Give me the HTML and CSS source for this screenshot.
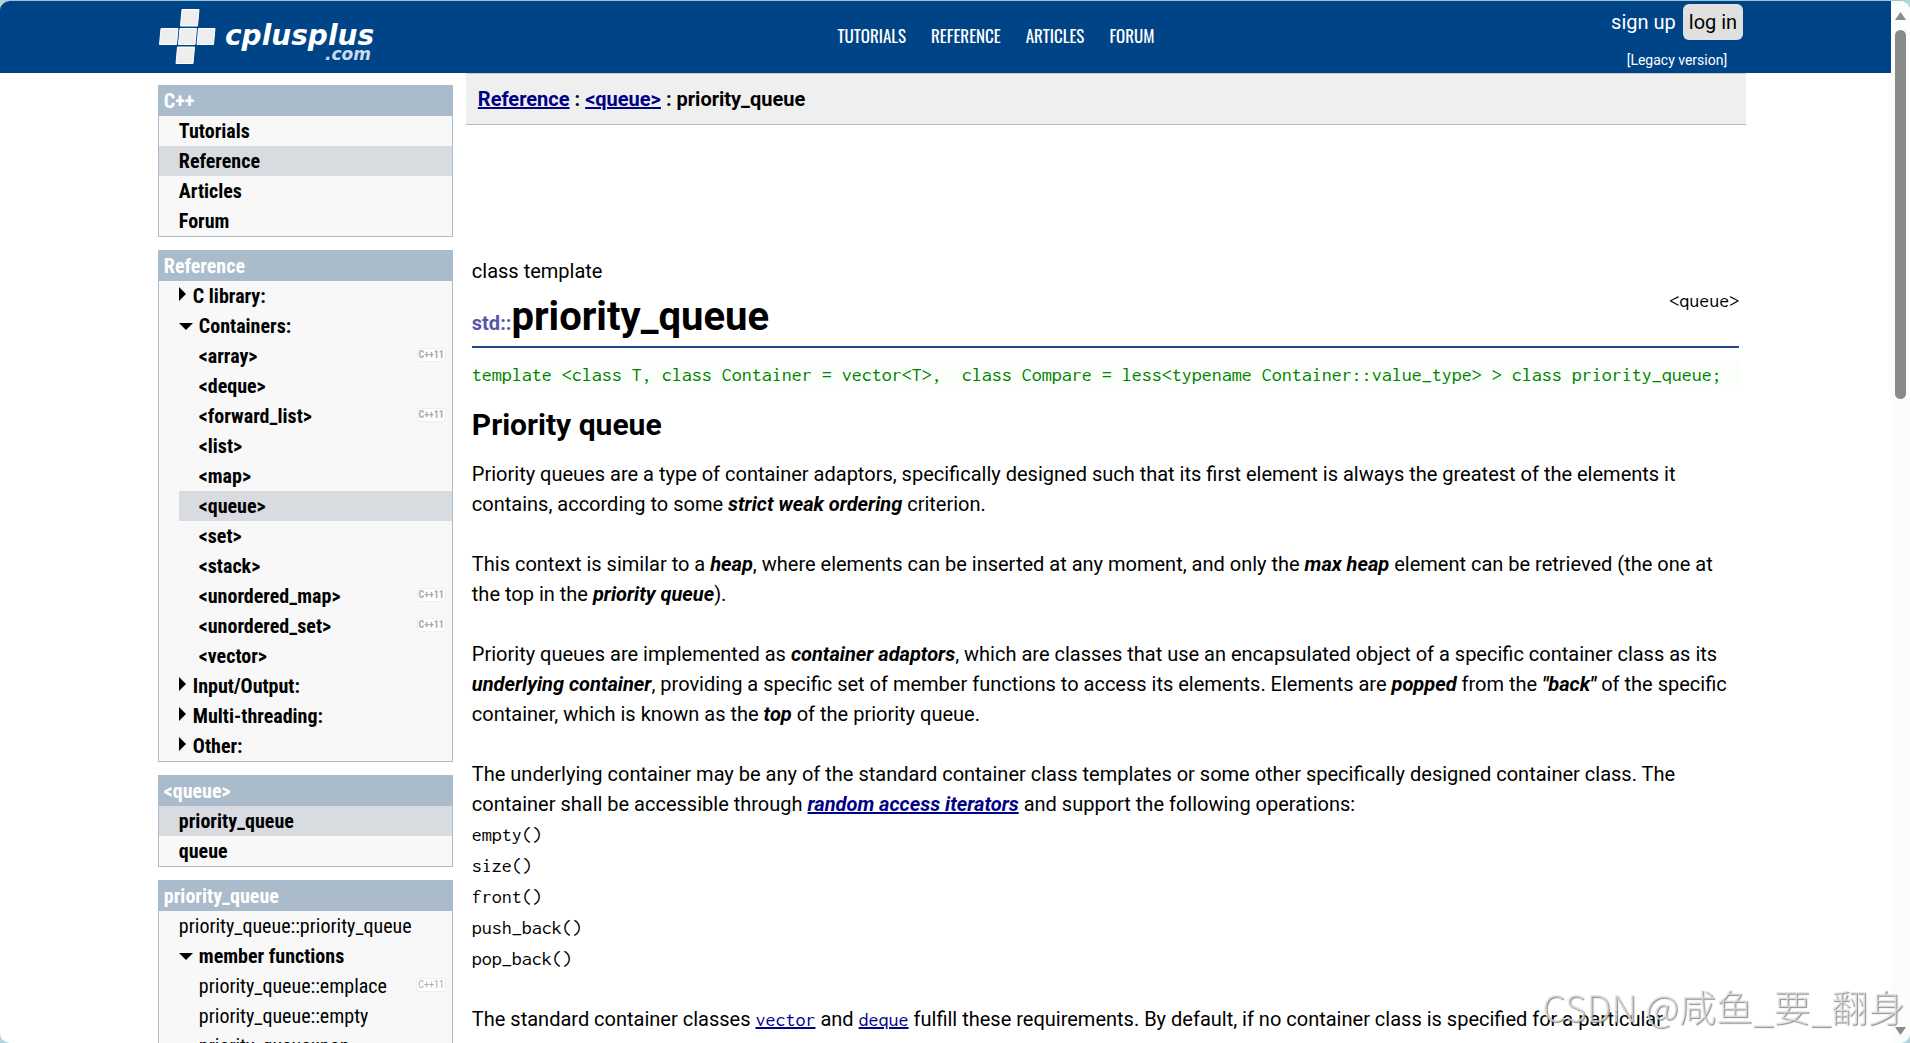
FILE: index.html
```html
<!DOCTYPE html>
<html lang="en">
<head>
	<meta charset="utf-8">
	<title>priority_queue - C++ Reference</title>
	<link rel="stylesheet" href="styles.css">
</head>
<body>
<div class="window">
	<div class="page">
		<header class="top">
			<div class="container top-in">
				<a class="logo" href="#" aria-label="cplusplus.com">
					<svg width="222" height="60" viewBox="0 0 222 60">
						<g fill="#eee" stroke="#fff" stroke-width="1">
							<path d="M24 4.500H41L39.500 21H22.500Z"/>
							<path d="M3 23.500H20L18.500 39.500H1.500Z"/>
							<path d="M22 23.500H38.500L37 39.500H20.500Z"/>
							<path d="M40.500 23.500H57L55.500 39.500H39Z"/>
							<path d="M19.500 42H36.500L35 58.500H18Z"/>
						</g>
						<text class="logo-name" x="67" y="40">cplusplus</text>
						<text class="logo-com" x="167" y="55">.com</text>
					</svg>
				</a>
				<nav class="menu">
					<a href="#">TUTORIALS</a>
					<a href="#">REFERENCE</a>
					<a href="#">ARTICLES</a>
					<a href="#">FORUM</a>
				</nav>
				<div class="user">
					<div class="login"><a href="#">sign up</a><button type="button">log in</button></div>
					<a class="legacy" href="#">[Legacy version]</a>
				</div>
			</div>
		</header>

		<div class="container cols">
			<aside class="side">
				<section class="box">
					<h4>C++</h4>
					<ul>
						<li><a href="#">Tutorials</a></li>
						<li class="on"><a href="#">Reference</a></li>
						<li><a href="#">Articles</a></li>
						<li><a href="#">Forum</a></li>
					</ul>
				</section>

				<section class="box">
					<h4>Reference</h4>
					<ul>
						<li><a class="closed" href="#">C library:</a></li>
						<li><a class="open" href="#">Containers:</a>
							<ul>
								<li><a href="#">&lt;array&gt;</a><span class="tag">C++11</span></li>
								<li><a href="#">&lt;deque&gt;</a></li>
								<li><a href="#">&lt;forward_list&gt;</a><span class="tag">C++11</span></li>
								<li><a href="#">&lt;list&gt;</a></li>
								<li><a href="#">&lt;map&gt;</a></li>
								<li class="on"><a href="#">&lt;queue&gt;</a></li>
								<li><a href="#">&lt;set&gt;</a></li>
								<li><a href="#">&lt;stack&gt;</a></li>
								<li><a href="#">&lt;unordered_map&gt;</a><span class="tag">C++11</span></li>
								<li><a href="#">&lt;unordered_set&gt;</a><span class="tag">C++11</span></li>
								<li><a href="#">&lt;vector&gt;</a></li>
							</ul>
						</li>
						<li><a class="closed" href="#">Input/Output:</a></li>
						<li><a class="closed" href="#">Multi-threading:</a></li>
						<li><a class="closed" href="#">Other:</a></li>
					</ul>
				</section>

				<section class="box">
					<h4>&lt;queue&gt;</h4>
					<ul>
						<li class="on"><a href="#">priority_queue</a></li>
						<li><a href="#">queue</a></li>
					</ul>
				</section>

				<section class="box funcs">
					<h4>priority_queue</h4>
					<ul>
						<li><a href="#">priority_queue::priority_queue</a></li>
						<li><a class="open" href="#">member functions</a>
							<ul>
								<li><a href="#">priority_queue::emplace</a><span class="tag">C++11</span></li>
								<li><a href="#">priority_queue::empty</a></li>
								<li><a href="#">priority_queue::pop</a></li>
							</ul>
						</li>
					</ul>
				</section>
			</aside>

			<main class="main">
				<div class="crumbs"><a href="#">Reference</a> : <a href="#">&lt;queue&gt;</a> : priority_queue</div>
				<article class="doc">
					<div class="kind">class template</div>
					<div class="title">
						<h1><span>std::</span>priority_queue</h1>
						<code>&lt;queue&gt;</code>
					</div>
					<pre class="proto">template &lt;class T, class Container = vector&lt;T&gt;,  class Compare = less&lt;typename Container::value_type&gt; &gt; class priority_queue;</pre>
					<h2>Priority queue</h2>
					<p>Priority queues are a type of container adaptors, specifically designed such that its first element is always the greatest of the elements it contains, according to some <i>strict weak ordering</i> criterion.</p>
					<p>This context is similar to a <i>heap</i>, where elements can be inserted at any moment, and only the <i>max heap</i> element can be retrieved (the one at the top in the <i>priority queue</i>).</p>
					<p>Priority queues are implemented as <i>container adaptors</i>, which are classes that use an encapsulated object of a specific container class as its <i>underlying container</i>, providing a specific set of member functions to access its elements. Elements are <i>popped</i> from the <i>"back"</i> of the specific container, which is known as the <i>top</i> of the priority queue.</p>
					<p>The underlying container may be any of the standard container class templates or some other specifically designed container class. The container shall be accessible through <a href="#"><i>random access iterators</i></a> and support the following operations:</p>
					<ul class="ops">
						<li><code>empty()</code></li>
						<li><code>size()</code></li>
						<li><code>front()</code></li>
						<li><code>push_back()</code></li>
						<li><code>pop_back()</code></li>
					</ul>
					<p>The standard container classes <a href="#"><code>vector</code></a> and <a href="#"><code>deque</code></a> fulfill these requirements. By default, if no container class is specified for a particular</p>
				</article>
			</main>
		</div>
	</div>

	<div class="scroll" aria-hidden="true">
		<svg width="13" height="10" viewBox="0 0 13 10"><path d="M6.500 1 12 9H1Z"/></svg>
		<div class="track"><div class="thumb"></div></div>
		<svg width="13" height="10" viewBox="0 0 13 10"><path d="M6.500 9 12 1H1Z"/></svg>
	</div>
</div>
<div class="mark">CSDN @咸鱼_要_翻身</div>
</body>
</html>
```
FILE: styles.css
```css
* { box-sizing: border-box; }
body {
	margin: 0;
	background: #b5d5da;
	color: #000;
	font: 20px/30px Roboto, "Liberation Sans", sans-serif;
}
ul, h1, h2, h4, p, pre { margin: 0; padding: 0; }
ul { list-style: none; }
a { color: inherit; text-decoration: none; }
code, pre { font: 20px/30px Inconsolata, "Liberation Mono", monospace; }

.window {
	display: flex;
	height: 100vh;
	overflow: hidden;
	border-top: 1px solid #9fc6d2;
	border-radius: 10px;
	background: #fff;
}
.page { flex: 1; min-width: 0; }
.container {
	width: 85%;
	margin: 0 auto;
	padding: 0 3px 0 16px;
}

/* header */
.top { background: #048; color: #fff; }
.top-in {
	display: grid;
	grid-template-columns: 1fr auto 1fr;
	height: 72px;
}
.logo { padding-top: 4px; }
.logo svg { display: block; }
.logo-name, .logo-com {
	font-family: "DejaVu Sans", sans-serif;
	font-weight: bold;
	font-style: italic;
}
.logo-name { font-size: 28px; fill: #fff; }
.logo-com { font-size: 17px; fill: #ccdaea; }
.menu {
	display: flex;
	align-items: center;
	gap: 25px;
	padding: 0 0 4px 88px;
	font-family: Oswald, "Roboto Condensed", Roboto, sans-serif;
	font-size: 17px;
}
.user { text-align: right; }
.login {
	display: flex;
	justify-content: flex-end;
	align-items: center;
	gap: 7px;
	padding: 3px 3px 0 0;
}
.login button {
	height: 36px;
	padding: 0 6px;
	border: 0;
	border-radius: 6px;
	background: #e0e0e0;
	color: #000;
	font: inherit;
}
.legacy {
	display: block;
	padding: 5px 19px 0 0;
	font-size: 14px;
}

/* left column */
.cols { display: flex; gap: 13px; }
.side {
	flex: 0 0 295px;
	display: flex;
	flex-direction: column;
	gap: 13px;
	padding-top: 12px;
	font-family: "Roboto Condensed", Roboto, sans-serif;
	font-weight: bold;
}
.box { border: 1px solid #abc; background: #f8f8f8; }
.box h4 {
	padding-left: 5px;
	background: #abc;
	color: #fff;
}
.box li { padding-left: 20px; position: relative; }
.box li.on { background: #d8dbe0; }
.box a { display: block; }
.funcs li { font-weight: normal; }
.box .closed, .box .open { display: flex; align-items: center; }
.funcs .open { font-weight: bold; }
.closed::before, .open::before {
	content: "";
	border: solid transparent;
}
.closed::before {
	margin: 0 7px 4px 0;
	border-width: 7px 0 7px 7px;
	border-left-color: #000;
}
.open::before {
	margin-right: 6px;
	border-width: 7px 7px 0;
	border-top-color: #000;
}
.tag {
	position: absolute;
	top: 7px;
	right: 6px;
	padding: 0 1px;
	border: 1px solid #eee;
	border-radius: 3px;
	background: #fff;
	color: #aaa;
	font-size: 10px;
	line-height: 12px;
}

/* right column */
.main { flex: 1; min-width: 0; }
.crumbs {
	height: 52px;
	padding: 10px 12px;
	border-top: 1px solid #ccc;
	border-bottom: 1px solid #bbb;
	background: #efefef;
	font-weight: bold;
}
.crumbs a, .doc p a { color: #008; text-decoration: underline; }
.doc { padding: 131px 7px 0 6px; }
.kind { height: 30px; }
.title {
	display: flex;
	justify-content: space-between;
	height: 62px;
	border-bottom: 2px solid #248;
}
.title h1 {
	padding-top: 16px;
	font-size: 40px;
	line-height: 30px;
}
.title span { color: #55a; font-size: 20px; }
.proto {
	margin: 12px 0 20px;
	background: #fafffa;
	color: #008000;
}
.doc h2 { margin-bottom: 19px; font-size: 30px; }
.doc p { margin-bottom: 30px; }
.doc i { font-weight: bold; }
.doc .ops { margin: -30px 0 30px; }
.ops li { height: 31px; }

/* scrollbar */
.scroll {
	width: 19px;
	display: flex;
	flex-direction: column;
	align-items: center;
	padding: 10px 0 7px;
	background: #fcfcfc;
}
.scroll path { fill: #8a8a8a; }
.track { flex: 1; padding-top: 9px; }
.thumb {
	width: 11px;
	height: 37%;
	border-radius: 6px;
	background: #8a8a8a;
}

.mark {
	position: fixed;
	right: 5px;
	bottom: 10px;
	color: rgba(225, 225, 225, .75);
	font: 300 37px/54px "Noto Sans CJK SC", sans-serif;
	text-shadow: 1px 1px 1px rgba(110, 110, 110, .8);
	white-space: nowrap;
}
```
